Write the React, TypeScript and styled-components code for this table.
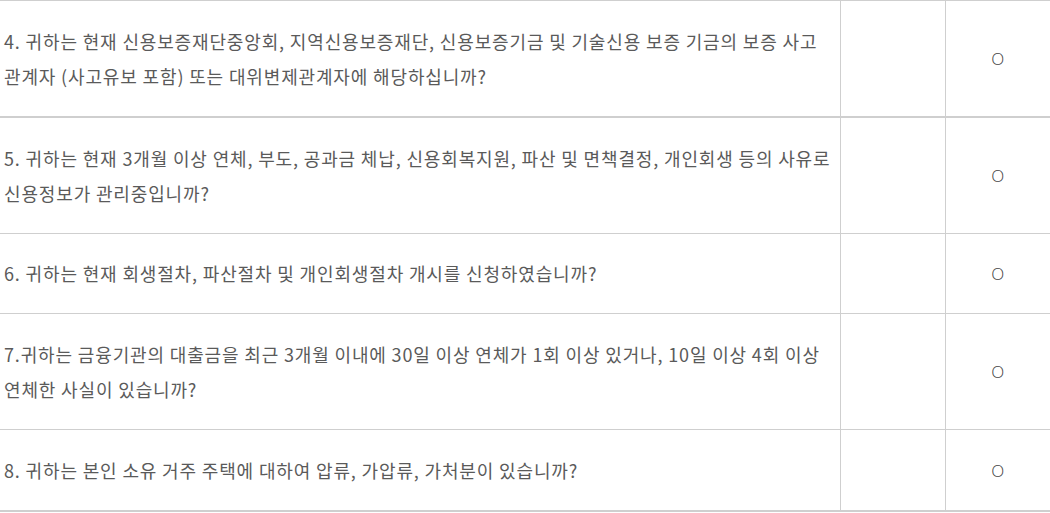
import React from "react";
import styled, { createGlobalStyle } from "styled-components";

const GlobalStyle = createGlobalStyle`
  html, body {
    margin: 0;
    padding: 0;
    background: #ffffff;
  }
  body {
    font-family: "Noto Sans CJK KR", "Noto Sans", sans-serif;
  }
`;

const Table = styled.table`
  width: 1050px;
  border-collapse: collapse;
  table-layout: fixed;
  border-top: 1px solid #cfcfcf;
`;

const Row = styled.tr<{ $thick?: boolean }>`
  border-bottom: ${(p) => (p.$thick ? "2px" : "1px")} solid #cfcfcf;
`;

const QuestionCell = styled.td<{ $h: number }>`
  padding: 0 0 0 4px;
  height: ${(p) => p.$h}px;
  font-size: 18px;
  line-height: 35px;
  letter-spacing: 0.85px;
  color: #5a5a5a;
  vertical-align: middle;
  border-right: 1px solid #cfcfcf;
  white-space: nowrap;
`;

const EmptyCell = styled.td`
  padding: 0;
  border-right: 1px solid #cfcfcf;
`;

const AnswerCell = styled.td`
  padding: 0;
  text-align: center;
  vertical-align: middle;
  font-family: "Open Sans", "Noto Sans", sans-serif;
  font-weight: 300;
  font-size: 17px;
  color: #444444;
`;

const rows = [
  {
    lines: [
      "4. 귀하는 현재 신용보증재단중앙회, 지역신용보증재단, 신용보증기금 및 기술신용 보증 기금의 보증 사고",
      "관계자 (사고유보 포함) 또는 대위변제관계자에 해당하십니까?",
    ],
    thick: true,
    h: 115,
  },
  {
    lines: [
      "5. 귀하는 현재 3개월 이상 연체, 부도, 공과금 체납, 신용회복지원, 파산 및 면책결정, 개인회생 등의 사유로",
      "신용정보가 관리중입니까?",
    ],
    h: 115,
  },
  {
    lines: ["6. 귀하는 현재 회생절차, 파산절차 및 개인회생절차 개시를 신청하였습니까?"],
    h: 79,
  },
  {
    lines: [
      "7.귀하는 금융기관의 대출금을 최근 3개월 이내에 30일 이상 연체가 1회 이상 있거나, 10일 이상 4회 이상",
      "연체한 사실이 있습니까?",
    ],
    h: 115,
  },
  {
    lines: ["8. 귀하는 본인 소유 거주 주택에 대하여 압류, 가압류, 가처분이 있습니까?"],
    thick: true,
    h: 80,
  },
];

export default function App() {
  return (
    <>
      <GlobalStyle />
      <Table>
        <colgroup>
          <col style={{ width: 840 }} />
          <col style={{ width: 105 }} />
          <col />
        </colgroup>
        <tbody>
          {rows.map((r, i) => (
            <Row key={i} $thick={r.thick}>
              <QuestionCell $h={r.h}>
                {r.lines.map((l, j) => (
                  <React.Fragment key={j}>
                    {j > 0 && <br />}
                    {l}
                  </React.Fragment>
                ))}
              </QuestionCell>
              <EmptyCell />
              <AnswerCell>O</AnswerCell>
            </Row>
          ))}
        </tbody>
      </Table>
    </>
  );
}
